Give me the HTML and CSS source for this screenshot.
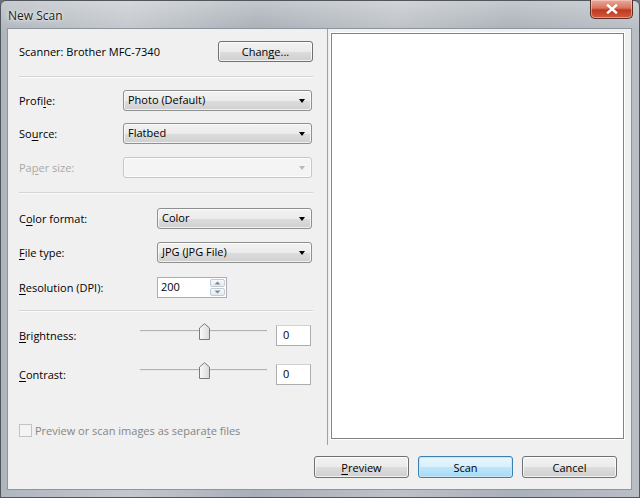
FILE: index.html
```html
<!DOCTYPE html>
<html>
<head>
<meta charset="utf-8">
<link rel="stylesheet" href="styles.css">
</head>
<body>
<div class="window">
  <div class="titlebar">
    <span class="title">New Scan</span>
    <div class="close"><svg width="12" height="10" viewBox="0 0 12 10"><path d="M2 1.5 L10 8.5 M10 1.5 L2 8.5" stroke="#fff" stroke-width="2.4" stroke-linecap="square"/></svg></div>
  </div>
  <div class="client">
    <div class="main">
      <div class="left">
        <div class="row r-scanner">
          <span class="label">Scanner: Brother MFC-7340</span>
          <button class="btn btn-change">Chan<u>g</u>e...</button>
        </div>
        <div class="sep s1"></div>
        <div class="row r-profile">
          <span class="label w1">Profi<u>l</u>e:</span>
          <div class="combo c1"><span>Photo (Default)</span><i class="arrow"></i></div>
        </div>
        <div class="row r-source">
          <span class="label w1">So<u>u</u>rce:</span>
          <div class="combo c1"><span>Flatbed</span><i class="arrow"></i></div>
        </div>
        <div class="row r-paper">
          <span class="label w1 disabled">Pa<u>p</u>er size:</span>
          <div class="combo c1 dis"><span></span><i class="arrow"></i></div>
        </div>
        <div class="sep s2"></div>
        <div class="row r-color">
          <span class="label w2">C<u>o</u>lor format:</span>
          <div class="combo c2"><span>Color</span><i class="arrow"></i></div>
        </div>
        <div class="row r-file">
          <span class="label w2"><u>F</u>ile type:</span>
          <div class="combo c2"><span>JPG (JPG File)</span><i class="arrow"></i></div>
        </div>
        <div class="row r-res">
          <span class="label w2"><u>R</u>esolution (DPI):</span>
          <div class="spin">
            <div class="spin-text">200</div>
            <div class="spin-btns">
              <div class="sb"><svg width="7" height="4" viewBox="0 0 7 4"><path d="M0.5 3.5 L3.5 0.5 L6.5 3.5 Z" fill="#7a8a99"/></svg></div>
              <div class="sb"><svg width="7" height="4" viewBox="0 0 7 4"><path d="M0.5 0.5 L3.5 3.5 L6.5 0.5 Z" fill="#7a8a99"/></svg></div>
            </div>
          </div>
        </div>
        <div class="sep s3"></div>
        <div class="row r-bright">
          <span class="label w3"><u>B</u>rightness:</span>
          <div class="slider">
            <div class="track"></div>
            <svg class="thumb" width="11" height="17" viewBox="0 0 11 17"><defs><linearGradient id="tg" x1="0" y1="0" x2="1" y2="0"><stop offset="0" stop-color="#fbfbfb"/><stop offset="1" stop-color="#d9d9d9"/></linearGradient></defs><path d="M0.5 16.5 V5 L5.5 0.7 L10.5 5 V16.5 Z" fill="url(#tg)" stroke="#7b7b7b"/></svg>
          </div>
          <div class="num">0</div>
        </div>
        <div class="row r-contrast">
          <span class="label w3"><u>C</u>ontrast:</span>
          <div class="slider">
            <div class="track"></div>
            <svg class="thumb" width="11" height="17" viewBox="0 0 11 17"><path d="M0.5 16.5 V5 L5.5 0.7 L10.5 5 V16.5 Z" fill="url(#tg)" stroke="#7b7b7b"/></svg>
          </div>
          <div class="num">0</div>
        </div>
        <div class="row r-check">
          <span class="checkbox"></span>
          <span class="label check-label">Preview or scan images as separa<u>t</u>e files</span>
        </div>
      </div>
      <div class="right">
        <div class="preview"></div>
      </div>
    </div>
    <div class="buttons">
      <button class="btn"><u>P</u>review</button>
      <button class="btn btn-default">Scan</button>
      <button class="btn">Cancel</button>
    </div>
  </div>
</div>
</body>
</html>
```

FILE: styles.css
```css
* { box-sizing: border-box; }
html, body { margin: 0; padding: 0; background: #6b7178; }
body { font-family: "Open Sans", "Noto Sans", sans-serif; font-size: 11px; color: #000; }

.window {
  width: 640px;
  height: 498px;
  padding: 0 7px 7px 6px;
  border: 1px solid #50565d;
  border-radius: 6px 6px 0 0;
  background:
    linear-gradient(to bottom, rgba(255,255,255,0.3), rgba(255,255,255,0) 30px),
    linear-gradient(to right, #b0b6bd 0%, #c3c8ce 20%, #a9afb6 40%, #bdc2c8 62%, #abb1b8 80%, #b8bec4 100%);
  display: flex;
  flex-direction: column;
}

.titlebar {
  height: 27px;
  display: flex;
  justify-content: space-between;
  align-items: flex-start;
}
.title {
  margin-top: 6px;
  margin-left: 1px;
  font-size: 12px;
  color: #1b1b1b;
  text-shadow: 0 0 6px rgba(255,255,255,0.9), 0 0 2px rgba(255,255,255,0.9);
}
.close {
  width: 43px;
  height: 19px;
  margin-top: -1px;
  margin-right: -1px;
  border: 1px solid #5a2d25;
  border-top: none;
  border-radius: 0 0 5px 5px;
  background: linear-gradient(to bottom, #e9a99b 0%, #d7745f 45%, #c0391f 55%, #cf5c3f 100%);
  box-shadow: inset 0 0 0 1px rgba(255,220,210,0.5);
  display: flex;
  align-items: center;
  justify-content: center;
}

.client {
  flex: 1;
  display: flex;
  flex-direction: column;
  background: #f0f0f0;
  border: 1px solid #8f959c;
}

.main {
  height: 416px;
  display: flex;
}

.left {
  width: 320px;
  flex: none;
  border-right: 1px solid #a0a0a0;
  padding: 0 14px 0 11px;
  display: flex;
  flex-direction: column;
}

.row { display: flex; align-items: center; height: 21px; flex: none; }
.label { white-space: nowrap; }
.label u, .btn u { text-decoration-thickness: 1px; text-underline-offset: 2px; }
.disabled { color: #a8a8a8; }
.check-label { color: #858585; }
.w1 { width: 104px; flex: none; }
.w2 { width: 138px; flex: none; }
.w3 { width: 121px; flex: none; }

.r-scanner { margin-top: 12px; justify-content: space-between; }
.s1 { margin-top: 14px; }
.r-profile { margin-top: 12px; }
.r-source { margin-top: 12px; }
.r-paper { margin-top: 13px; }
.s2 { margin-top: 14px; }
.r-color { margin-top: 14px; }
.r-file { margin-top: 13px; }
.r-res { margin-top: 14px; }
.s3 { margin-top: 12px; }
.r-bright { margin-top: 13px; }
.r-contrast { margin-top: 18px; }
.r-check { margin-top: 39px; height: 13px; }

.sep {
  height: 2px;
  flex: none;
  border-top: 1px solid #d5d5d5;
  border-bottom: 1px solid #fbfbfb;
}

.btn {
  font-family: inherit;
  font-size: 11px;
  color: #000;
  width: 95px;
  height: 22px;
  padding: 0;
  border: 1px solid #707070;
  border-radius: 3px;
  background: linear-gradient(to bottom, #f2f2f2 0%, #ebebeb 50%, #dddddd 51%, #cfcfcf 100%);
  box-shadow: inset 0 0 0 1px rgba(255,255,255,0.75);
}
.btn-change { height: 21px; }
.btn-default {
  border-color: #3c7fb1;
  background: linear-gradient(to bottom, #eaf6fd 0%, #d9f0fc 50%, #bee6fd 51%, #a7d9f5 100%);
  box-shadow: inset 0 0 0 1px #c6e6f8;
}

.combo {
  height: 21px;
  border: 1px solid #8e8f8f;
  border-radius: 3px;
  background: linear-gradient(to bottom, #f2f2f2 0%, #ebebeb 50%, #dddddd 51%, #cfcfcf 100%);
  box-shadow: inset 0 0 0 1px rgba(255,255,255,0.7);
  display: flex;
  align-items: center;
  justify-content: space-between;
  padding: 0 4px 2px 4px;
}
.c1 { width: 189px; }
.c2 { width: 155px; }
.combo.dis {
  border-color: #c4c7c9;
  background: #f4f4f4;
}
.arrow {
  width: 0; height: 0;
  border-left: 3.5px solid transparent;
  border-right: 3.5px solid transparent;
  border-top: 4px solid #000;
  margin-right: 2px;
  margin-top: 2px;
}
.combo.dis .arrow { border-top-color: #b9b9b9; }

.spin {
  display: flex;
  height: 21px;
  border: 1px solid #abadb3;
  background: #fff;
  width: 70px;
}
.spin-text { flex: 1; padding: 1px 0 0 3px; }
.spin-btns { width: 16px; display: flex; flex-direction: column; padding: 1px 1px 1px 0; gap: 1px; }
.sb {
  flex: 1;
  border: 1px solid #c2cbd3;
  border-radius: 2px;
  background: linear-gradient(to bottom, #f7f9fb, #e5eaee);
  display: flex;
  align-items: center;
  justify-content: center;
}

.slider {
  position: relative;
  width: 127px;
  height: 21px;
  flex: none;
}
.track {
  position: absolute;
  left: 0; right: 0;
  top: 5px;
  height: 2px;
  border-top: 1px solid #b2b2b2;
  border-bottom: 1px solid #e8e8e8;
}
.thumb { position: absolute; left: 59px; top: -2px; }

.num {
  margin-left: 9px;
  width: 35px;
  height: 21px;
  border: 1px solid #abadb3;
  border-top-color: #d0d2d6;
  background: #fff;
  padding: 1px 0 0 6px;
}

.checkbox {
  width: 13px; height: 13px;
  border: 1px solid #c3c3c3;
  background: #f4f4f4;
  margin-right: 3px;
  flex: none;
}

.right {
  flex: 1;
  padding: 4px 7px 0 3px;
}
.preview {
  height: 406px;
  border: 1px solid #7f8489;
  background: #fff;
  box-shadow: 0 0 0 1px #fff;
}

.buttons {
  flex: 1;
  display: flex;
  justify-content: flex-end;
  align-items: flex-start;
  padding: 11px 14px 0 0;
  gap: 9px;
}
```
